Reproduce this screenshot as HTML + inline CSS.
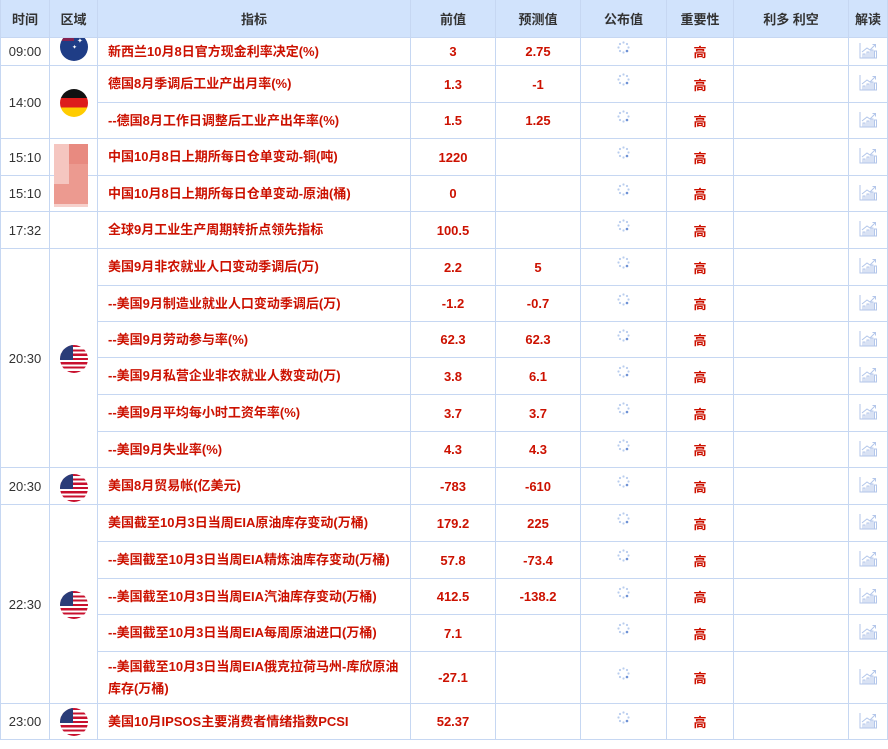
<!DOCTYPE html>
<html><head><meta charset="utf-8"><style>
html,body{margin:0;padding:0;background:#fff;}
body{width:888px;height:749px;overflow:hidden;position:relative;font-family:"Liberation Sans","Noto Sans CJK SC",sans-serif;}
table{position:absolute;left:0;top:0;border-collapse:collapse;table-layout:fixed;width:887px;}
td,th{border:1px solid #c6d7f2;padding:0;font-size:13px;text-align:center;}
th{background:#d1e3fc;color:#333;font-weight:bold;height:37px;border-top:none;}
td{color:#333;}
td.t{color:#333;}
td.n{text-align:left;padding-left:10px;color:#cc1100;font-weight:bold;line-height:22px;}
td.v{color:#cc1100;font-weight:bold;}
td.h{color:#cc1100;font-weight:bold;}
.sp{display:inline-block;width:13px;height:13px;position:relative;top:-3px;}
.ch{display:inline-block;width:19px;height:17px;}
#fl{position:absolute;left:0;top:38px;width:888px;height:711px;overflow:hidden;}
.f{position:absolute;width:28px;height:28px;border-radius:50%;overflow:hidden;}
.us{background:repeating-linear-gradient(#c8102e 0 2.15px,#fff 2.15px 4.3px);}
.us:before{content:"";position:absolute;left:0;top:0;width:13px;height:15px;background:#2a3c78;}
</style></head><body>
<table>
<colgroup><col style="width:49px"><col style="width:48px"><col style="width:313px"><col style="width:85px"><col style="width:85px"><col style="width:86px"><col style="width:67px"><col style="width:115px"><col style="width:39px"></colgroup>
<tr><th>时间</th><th>区域</th><th>指标</th><th>前值</th><th>预测值</th><th>公布值</th><th>重要性</th><th>利多 利空</th><th>解读</th></tr>
<tr style="height:28px"><td>09:00</td><td></td><td class="n">新西兰10月8日官方现金利率决定(%)</td><td class="v">3</td><td class="v">2.75</td><td>S</td><td class="h">高</td><td></td><td>C</td></tr>
<tr style="height:37px"><td rowspan="2">14:00</td><td rowspan="2"></td><td class="n">德国8月季调后工业产出月率(%)</td><td class="v">1.3</td><td class="v">-1</td><td>S</td><td class="h">高</td><td></td><td>C</td></tr>
<tr style="height:36px"><td class="n">--德国8月工作日调整后工业产出年率(%)</td><td class="v">1.5</td><td class="v">1.25</td><td>S</td><td class="h">高</td><td></td><td>C</td></tr>
<tr style="height:37px"><td>15:10</td><td></td><td class="n">中国10月8日上期所每日仓单变动-铜(吨)</td><td class="v">1220</td><td></td><td>S</td><td class="h">高</td><td></td><td>C</td></tr>
<tr style="height:36px"><td>15:10</td><td></td><td class="n">中国10月8日上期所每日仓单变动-原油(桶)</td><td class="v">0</td><td></td><td>S</td><td class="h">高</td><td></td><td>C</td></tr>
<tr style="height:37px"><td>17:32</td><td></td><td class="n">全球9月工业生产周期转折点领先指标</td><td class="v">100.5</td><td></td><td>S</td><td class="h">高</td><td></td><td>C</td></tr>
<tr style="height:37px"><td rowspan="6">20:30</td><td rowspan="6"></td><td class="n">美国9月非农就业人口变动季调后(万)</td><td class="v">2.2</td><td class="v">5</td><td>S</td><td class="h">高</td><td></td><td>C</td></tr>
<tr style="height:36px"><td class="n">--美国9月制造业就业人口变动季调后(万)</td><td class="v">-1.2</td><td class="v">-0.7</td><td>S</td><td class="h">高</td><td></td><td>C</td></tr>
<tr style="height:36px"><td class="n">--美国9月劳动参与率(%)</td><td class="v">62.3</td><td class="v">62.3</td><td>S</td><td class="h">高</td><td></td><td>C</td></tr>
<tr style="height:37px"><td class="n">--美国9月私营企业非农就业人数变动(万)</td><td class="v">3.8</td><td class="v">6.1</td><td>S</td><td class="h">高</td><td></td><td>C</td></tr>
<tr style="height:37px"><td class="n">--美国9月平均每小时工资年率(%)</td><td class="v">3.7</td><td class="v">3.7</td><td>S</td><td class="h">高</td><td></td><td>C</td></tr>
<tr style="height:36px"><td class="n">--美国9月失业率(%)</td><td class="v">4.3</td><td class="v">4.3</td><td>S</td><td class="h">高</td><td></td><td>C</td></tr>
<tr style="height:37px"><td>20:30</td><td></td><td class="n">美国8月贸易帐(亿美元)</td><td class="v">-783</td><td class="v">-610</td><td>S</td><td class="h">高</td><td></td><td>C</td></tr>
<tr style="height:37px"><td rowspan="5">22:30</td><td rowspan="5"></td><td class="n">美国截至10月3日当周EIA原油库存变动(万桶)</td><td class="v">179.2</td><td class="v">225</td><td>S</td><td class="h">高</td><td></td><td>C</td></tr>
<tr style="height:37px"><td class="n">--美国截至10月3日当周EIA精炼油库存变动(万桶)</td><td class="v">57.8</td><td class="v">-73.4</td><td>S</td><td class="h">高</td><td></td><td>C</td></tr>
<tr style="height:36px"><td class="n">--美国截至10月3日当周EIA汽油库存变动(万桶)</td><td class="v">412.5</td><td class="v">-138.2</td><td>S</td><td class="h">高</td><td></td><td>C</td></tr>
<tr style="height:37px"><td class="n">--美国截至10月3日当周EIA每周原油进口(万桶)</td><td class="v">7.1</td><td></td><td>S</td><td class="h">高</td><td></td><td>C</td></tr>
<tr style="height:52px"><td class="n">--美国截至10月3日当周EIA俄克拉荷马州-库欣原油库存(万桶)</td><td class="v">-27.1</td><td></td><td>S</td><td class="h">高</td><td></td><td>C</td></tr>
<tr style="height:36px"><td>23:00</td><td></td><td class="n">美国10月IPSOS主要消费者情绪指数PCSI</td><td class="v">52.37</td><td></td><td>S</td><td class="h">高</td><td></td><td>C</td></tr>
</table>
<div id="fl">
<div class="f" style="left:60px;top:-5px;background:#1f3d86"><div style="position:absolute;left:2px;top:0;width:12px;height:8px;background:#c8102e;opacity:.6"></div><span style="position:absolute;left:17px;top:4px;color:#fff;font-size:7px">✦</span><span style="position:absolute;left:12px;top:11px;color:#fff;font-size:6px">✦</span></div>
<div class="f" style="left:60px;top:51px;background:linear-gradient(#111 0 33%,#dd1c1c 33% 66%,#ffcc00 66%)"></div>
<div style="position:absolute;left:54px;top:106px;width:34px;height:62px;background:#ec9a90"><div style="position:absolute;left:0;top:0;width:15px;height:40px;background:#f5c6c0"></div><div style="position:absolute;left:15px;top:0;width:19px;height:20px;background:#e88a80"></div><div style="position:absolute;left:0;top:60px;width:34px;height:3px;background:#f6d0cb"></div></div>
<div class="f us" style="left:60px;top:307px"></div>
<div class="f us" style="left:60px;top:436px"></div>
<div class="f us" style="left:60px;top:553px"></div>
<div class="f us" style="left:60px;top:670px"></div>
</div>
<script>
var sp='<svg class="sp" viewBox="0 0 13 13"><g fill="#b9cdee"><circle cx="6.5" cy="1.5" r="1.1"/><circle cx="10" cy="3" r="1.1"/><circle cx="11.5" cy="6.5" r="1.1"/><circle cx="10" cy="10" r="1.3" fill="#6f92d6"/><circle cx="6.5" cy="11.5" r="1.1"/><circle cx="3" cy="10" r="1.1"/><circle cx="1.5" cy="6.5" r="1.1"/><circle cx="3" cy="3" r="1.1"/></g></svg>';
var ch='<svg class="ch" viewBox="0 0 19 17" fill="none" stroke="#b3c6ea" stroke-width="1"><path d="M1 1V16H18"/><path d="M3 10L8 6L11 8L16 3"/><path d="M13.5 2.5H16.5V5.5"/><rect x="4" y="12" width="2" height="4"/><rect x="8" y="10" width="2" height="6"/><rect x="12" y="8" width="2" height="8"/><rect x="15.5" y="9" width="2" height="7"/></svg>';
document.querySelectorAll('td').forEach(function(t){if(t.textContent==='S')t.innerHTML=sp;else if(t.textContent==='C')t.innerHTML=ch;});
</script>
</body></html>
